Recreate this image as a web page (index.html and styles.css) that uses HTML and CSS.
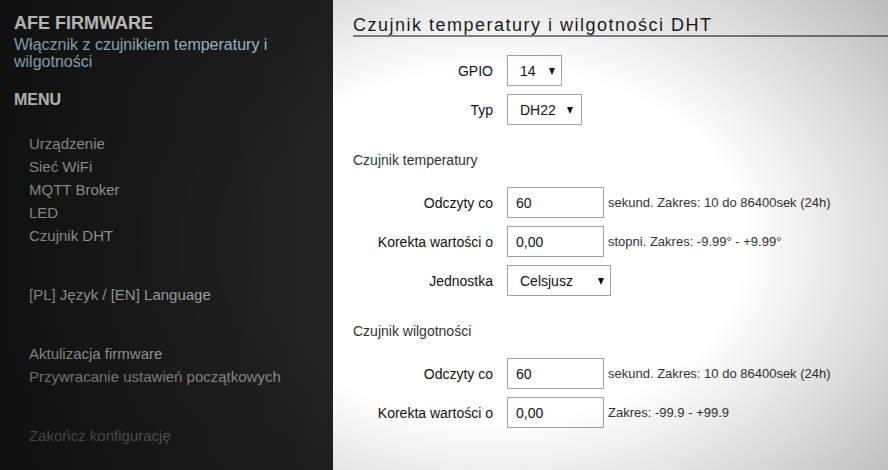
FILE: index.html
```html
<!DOCTYPE html>
<html lang="pl">
<head>
    <meta charset="UTF-8">
    <meta name="viewport" content="width=device-width, initial-scale=1.0">
    <title>AFE Firmware - Czujnik DHT</title>
    <link rel="stylesheet" href="styles.css">
</head>
<body>
    <div class="layout">
        <aside class="sidebar">
            <h1 class="brand">AFE FIRMWARE</h1>
            <p class="device">Włącznik z czujnikiem temperatury i wilgotności</p>
            <h2 class="menu-title">MENU</h2>

            <ul class="menu">
                <li><a href="#">Urządzenie</a></li>
                <li><a href="#">Sieć WiFi</a></li>
                <li><a href="#">MQTT Broker</a></li>
                <li><a href="#">LED</a></li>
                <li><a href="#">Czujnik DHT</a></li>
            </ul>
            <ul class="menu">
                <li><a href="#">[PL] Język / [EN] Language</a></li>
            </ul>
            <ul class="menu">
                <li><a href="#">Aktulizacja firmware</a></li>
                <li><a href="#" class="dim">Przywracanie ustawień początkowych</a></li>
            </ul>
            <ul class="menu">
                <li><a href="#" class="exit">Zakończ konfigurację</a></li>
            </ul>
        </aside>

        <main class="content">
            <h2 class="section-title">Czujnik temperatury i wilgotności DHT</h2>

            <form class="settings">
                <div class="row">
                    <label for="gpio">GPIO</label>
                    <span class="select-box gpio">
                        <select id="gpio"><option>14</option></select>
                    </span>
                </div>
                <div class="row">
                    <label for="typ">Typ</label>
                    <span class="select-box typ">
                        <select id="typ"><option>DH22</option></select>
                    </span>
                </div>

                <h3 class="group-title">Czujnik temperatury</h3>
                <div class="row">
                    <label for="t-interval">Odczyty co</label>
                    <input type="text" id="t-interval" value="60">
                    <span class="hint">sekund. Zakres: 10 do 86400sek (24h)</span>
                </div>
                <div class="row">
                    <label for="t-correction">Korekta wartości o</label>
                    <input type="text" id="t-correction" value="0,00">
                    <span class="hint">stopni. Zakres: -9.99° - +9.99°</span>
                </div>
                <div class="row">
                    <label for="unit">Jednostka</label>
                    <span class="select-box unit">
                        <select id="unit"><option>Celsjusz</option></select>
                    </span>
                </div>

                <h3 class="group-title">Czujnik wilgotności</h3>
                <div class="row">
                    <label for="h-interval">Odczyty co</label>
                    <input type="text" id="h-interval" value="60">
                    <span class="hint">sekund. Zakres: 10 do 86400sek (24h)</span>
                </div>
                <div class="row">
                    <label for="h-correction">Korekta wartości o</label>
                    <input type="text" id="h-correction" value="0,00">
                    <span class="hint">Zakres: -99.9 - +99.9</span>
                </div>
            </form>
        </main>
    </div>

    <!-- przyciemnienie brzegów -->
    <div class="vignette"></div>
</body>
</html>
```

FILE: styles.css
```css
html, body {
    margin: 0;
    padding: 0;
    height: 100%;
}

body {
    font-family: "Liberation Sans", Arial, sans-serif;
    overflow: hidden;
}

.layout {
    display: flex;
    height: 470px;
}

/* Menu boczne */
.sidebar {
    width: 333px;
    flex-shrink: 0;
    box-sizing: border-box;
    padding: 13px 14px 0 14px;
    background: linear-gradient(to right, #171717, #232323);
}

.brand {
    margin: 0;
    font-size: 18px;
    line-height: 20px;
    font-weight: bold;
    color: #f0f0f0;
}

.device {
    margin: 3px 0 0 0;
    font-size: 16px;
    line-height: 17px;
    color: #add0e2;
}

.menu-title {
    margin: 21px 0 0 0;
    font-size: 16px;
    line-height: 18px;
    font-weight: bold;
    color: #e8e8e8;
}

.menu {
    list-style: none;
    margin: 36px 0 0 0;
    padding: 0 0 0 15px;
}

.menu-title + .menu {
    margin-top: 23px;
}

.menu li {
    font-size: 15px;
    line-height: 23px;
}

.menu a {
    color: #a6a6a6;
    text-decoration: none;
}

.menu a.dim {
    color: #8e8e8e;
}

.menu a.exit {
    color: #5e5e5e;
}

/* Zawartość */
.content {
    flex: 1;
    padding: 15px 0 0 20px;
    background: #ffffff;
}

.section-title {
    margin: 0 0 18px 0;
    font-size: 18px;
    line-height: 20px;
    font-weight: normal;
    letter-spacing: 1.5px;
    color: #1e1e1e;
    border-bottom: 2px solid #858585;
}

.row {
    display: flex;
    align-items: center;
    height: 31px;
    margin-bottom: 8px;
}

.row label {
    width: 140px;
    margin-right: 14px;
    text-align: right;
    font-size: 14px;
    color: #111;
}

.row input {
    box-sizing: border-box;
    width: 97px;
    height: 31px;
    padding: 0 8px;
    border: 1px solid #a3a3a3;
    border-radius: 0;
    background: #fff;
    font-family: inherit;
    font-size: 14px;
    color: #111;
    outline: none;
}

.hint {
    margin-left: 4px;
    font-size: 13px;
    color: #333;
}

.group-title {
    margin: 26px 0 18px 0;
    font-size: 14px;
    line-height: 18px;
    font-weight: normal;
    color: #333;
}

.select-box {
    position: relative;
    display: block;
    height: 31px;
}

.select-box select {
    -webkit-appearance: none;
    appearance: none;
    box-sizing: border-box;
    width: 100%;
    height: 31px;
    padding: 0 0 0 12px;
    border: 1px solid #a3a3a3;
    border-radius: 0;
    background: #fff;
    font-family: inherit;
    font-size: 14px;
    color: #111;
    outline: none;
}

.select-box::after {
    content: "";
    position: absolute;
    top: 13px;
    right: 7px;
    border-left: 3.5px solid transparent;
    border-right: 3.5px solid transparent;
    border-top: 7px solid #111;
    pointer-events: none;
}

.select-box.gpio { width: 55px; }
.select-box.typ { width: 75px; }
.select-box.typ::after { right: 9px; }
.select-box.unit { width: 104px; }

.vignette {
    position: fixed;
    inset: 0;
    pointer-events: none;
    background: radial-gradient(ellipse 58% 78% at 56% 52%, rgba(0, 0, 0, 0) 48%, rgba(0, 0, 0, 0.26) 100%);
}
```
